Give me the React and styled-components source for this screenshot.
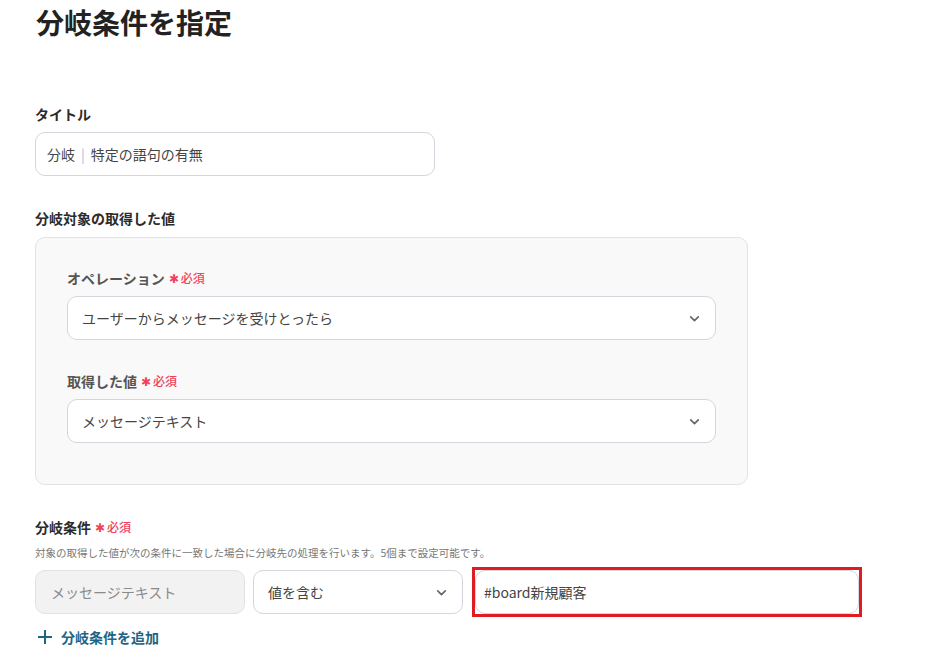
import styled, { createGlobalStyle } from 'styled-components';

const GlobalStyle = createGlobalStyle`
  body {
    margin: 0;
    background: #ffffff;
    font-family: "Noto Sans CJK JP", "Noto Sans", sans-serif;
    color: #333333;
  }
`;

const Page = styled.div`
  padding: 4px 36px 0 35px;
  width: 934px;
  height: 669px;
  box-sizing: border-box;
  overflow: hidden;
`;

const Heading = styled.h1`
  margin: 0 0 0 1px;
  font-size: 28px;
  line-height: 36px;
  font-weight: 700;
  color: #222222;
`;

const Section = styled.div`
  margin-top: ${(p) => p.$top}px;
`;

const Label = styled.div`
  display: flex;
  align-items: center;
  gap: 4px;
  font-size: 14px;
  line-height: 20px;
  font-weight: 700;
  color: ${(p) => (p.$muted ? '#555555' : '#2b2b2b')};
  margin-bottom: ${(p) => p.$gap ?? 8}px;
`;

const Required = styled.span`
  display: inline-flex;
  align-items: center;
  gap: 2px;
  font-size: 12px;
  font-weight: 500;
  color: #f0415a;
`;

const Star = styled.span`
  font-size: 12px;
  line-height: 1;
`;

const Field = styled.div`
  display: flex;
  align-items: center;
  box-sizing: border-box;
  width: ${(p) => p.$w || '100%'};
  height: 44px;
  padding: 0 14px 0 ${(p) => p.$pl || 11}px;
  border: 1px solid ${(p) => (p.$disabled ? '#e2e2e2' : '#d3d6dc')};
  border-radius: 10px;
  background: ${(p) => (p.$disabled ? '#f2f2f2' : '#ffffff')};
  font-size: 14px;
  color: ${(p) => (p.$disabled ? '#8a8a8a' : '#444444')};
`;

const FieldText = styled.span`
  flex: 1;
  white-space: nowrap;
`;

const Pipe = styled.span`
  color: #9cc0dc;
  margin: 0 6px;
`;

const Panel = styled.div`
  width: 713px;
  box-sizing: border-box;
  padding: 30px 31px 41px 31px;
  background: #f9f9f9;
  border: 1px solid #e3e3e3;
  border-radius: 10px;
`;

const PanelGroup = styled.div`
  margin-top: ${(p) => p.$top || 0}px;
`;

const Help = styled.div`
  font-size: 10.5px;
  line-height: 16px;
  color: #777777;
  margin-top: 8px;
  margin-bottom: 6px;
`;

const Row = styled.div`
  display: flex;
  align-items: center;
  gap: 8px;
`;

const Highlight = styled.div`
  margin-left: 1px;
  border: 3px solid #e01b22;
  display: flex;
`;

const AddButton = styled.button`
  display: flex;
  align-items: center;
  gap: 9px;
  margin-top: 10px;
  margin-left: 3px;
  padding: 0;
  border: none;
  background: none;
  font-family: inherit;
  font-size: 14px;
  font-weight: 700;
  color: #1d6585;
  cursor: pointer;
`;

const Chevron = () => (
  <svg width="13" height="13" viewBox="0 0 24 24" fill="none" stroke="#666" strokeWidth="3" strokeLinecap="round" strokeLinejoin="round">
    <path d="M5 9l7 7 7-7" />
  </svg>
);

const Plus = () => (
  <svg width="14" height="14" viewBox="0 0 14 14" stroke="#1d6585" strokeWidth="2" strokeLinecap="square">
    <path d="M7 1v12M1 7h12" />
  </svg>
);

const Req = () => (
  <Required>
    <Star>✱</Star>必須
  </Required>
);

const App = () => (
  <Page>
    <GlobalStyle />
    <Heading>分岐条件を指定</Heading>

    <Section $top={64}>
      <Label>タイトル</Label>
      <Field $w="400px">
        <FieldText>
          分岐<Pipe>|</Pipe>特定の語句の有無
        </FieldText>
      </Field>
    </Section>

    <Section $top={32}>
      <Label $gap={9}>分岐対象の取得した値</Label>
      <Panel>
        <PanelGroup>
          <Label $muted $gap={8}>
            オペレーション<Req />
          </Label>
          <Field $pl={14}>
            <FieldText>ユーザーからメッセージを受けとったら</FieldText>
            <Chevron />
          </Field>
        </PanelGroup>
        <PanelGroup $top={31}>
          <Label $muted $gap={8}>
            取得した値<Req />
          </Label>
          <Field $pl={14}>
            <FieldText>メッセージテキスト</FieldText>
            <Chevron />
          </Field>
        </PanelGroup>
      </Panel>
    </Section>

    <Section $top={32}>
      <Label $gap={0}>
        分岐条件<Req />
      </Label>
      <Help>対象の取得した値が次の条件に一致した場合に分岐先の処理を行います。5個まで設定可能です。</Help>
      <Row>
        <Field $w="210px" $disabled $pl={15}>
          <FieldText>メッセージテキスト</FieldText>
        </Field>
        <Field $w="210px" $pl={14}>
          <FieldText>値を含む</FieldText>
          <Chevron />
        </Field>
        <Highlight>
          <Field $w="384px" $pl={8}>
            <FieldText>#board新規顧客</FieldText>
          </Field>
        </Highlight>
      </Row>
      <AddButton>
        <Plus />
        分岐条件を追加
      </AddButton>
    </Section>
  </Page>
);

export default App;
